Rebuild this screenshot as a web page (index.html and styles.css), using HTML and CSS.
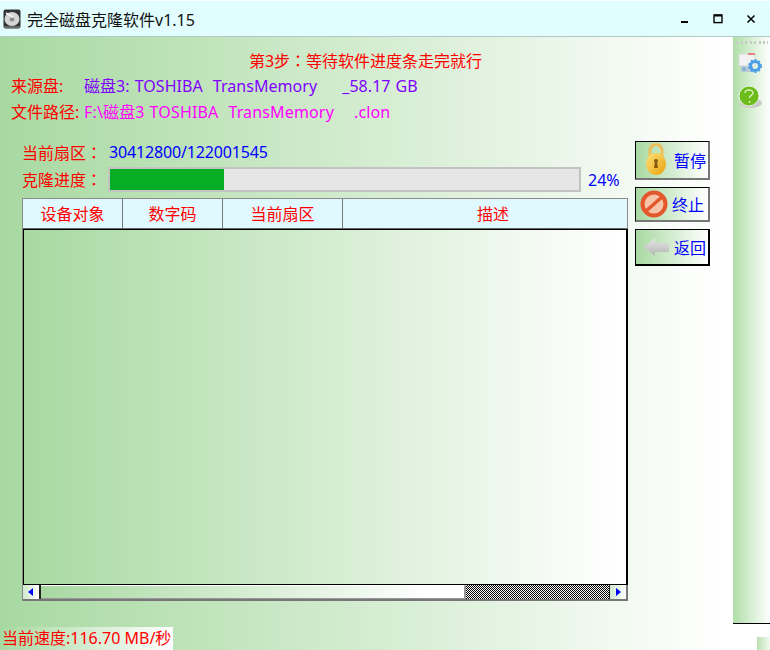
FILE: index.html
```html
<!DOCTYPE html>
<html lang="zh">
<head>
<meta charset="utf-8">
<title>完全磁盘克隆软件v1.15</title>
<link rel="stylesheet" href="styles.css">
</head>
<body>
<div class="app">
  <header class="titlebar">
    <svg class="app-icon" viewBox="0 0 18 20" width="18" height="20">
      <rect x="0.5" y="0.5" width="17" height="19" rx="2" fill="#333"/>
      <ellipse cx="9" cy="10" rx="7.500" ry="7" fill="#d4d4d4"/>
      <ellipse cx="9" cy="10.500" rx="2.400" ry="2" fill="#8a8a8a"/>
      <path d="M3 4 L10 8" stroke="#f4f4f4" stroke-width="1.500"/>
      <rect x="1" y="17" width="16" height="2" fill="#666"/>
    </svg>
    <span class="app-title">完全磁盘克隆软件v1.15</span>
    <div class="win-controls">
      <svg viewBox="0 0 12 12" width="12" height="12"><rect x="2" y="8" width="7" height="2" fill="#000"/></svg>
      <svg viewBox="0 0 12 12" width="12" height="12"><rect x="2" y="2" width="8" height="7.600" fill="none" stroke="#000" stroke-width="1.400"/><rect x="2" y="1.500" width="8" height="2" fill="#000"/></svg>
      <svg viewBox="0 0 12 12" width="12" height="12"><path d="M2.500 2.500 L9.500 9.500 M9.500 2.500 L2.500 9.500" stroke="#000" stroke-width="1.500" fill="none"/></svg>
    </div>
  </header>

  <div class="workspace">
    <main class="main">
      <p class="step">第3步<span class="colon" lang="zh-Hant">：</span>等待软件进度条走完就行</p>
      <div class="info-row"><span class="info-label">来源盘:</span><span class="source">磁盘3: TOSHIBA  TransMemory     _58.17 GB</span></div>
      <div class="info-row"><span class="info-label">文件路径:</span><span class="path">F:\磁盘3 TOSHIBA  TransMemory    .clon</span></div>

      <div class="content">
        <section class="left">
          <div class="prog-row"><span class="prog-label">当前扇区<span class="colon" lang="zh-Hant">：</span></span><span class="sector">30412800/122001545</span></div>
          <div class="prog-row bar-row">
            <span class="prog-label">克隆进度<span class="colon" lang="zh-Hant">：</span></span>
            <div class="bar"><div class="fill"></div></div>
            <span class="pct">24%</span>
          </div>
          <div class="table">
            <div class="thead">
              <div class="th c1">设备对象</div>
              <div class="th c2">数字码</div>
              <div class="th c3">当前扇区</div>
              <div class="th c4">描述</div>
            </div>
            <div class="tbody"></div>
            <div class="hscroll">
              <div class="sb-btn"><svg viewBox="0 0 8 8" width="8" height="8"><path d="M6 0 V8 L1 4 Z" fill="#0000ff"/></svg></div>
              <div class="sb-thumb"></div>
              <div class="sb-track"></div>
              <div class="sb-btn"><svg viewBox="0 0 8 8" width="8" height="8"><path d="M2 0 V8 L7 4 Z" fill="#0000ff"/></svg></div>
            </div>
          </div>
        </section>

        <aside class="actions">
          <button class="btn btn-pause">
            <svg viewBox="0 0 26 34" width="26" height="34">
              <defs><linearGradient id="gold" x1="0" y1="0" x2="1" y2="1"><stop offset="0" stop-color="#ffe27a"/><stop offset="1" stop-color="#e8a10c"/></linearGradient></defs>
              <path d="M7 14 V7 a6 5.500 0 0 1 12 0 V14" fill="none" stroke="#eebf5a" stroke-width="3"/>
              <ellipse cx="13" cy="21" rx="10" ry="11" fill="url(#gold)"/>
              <path d="M13 16 a2 2 0 0 1 1.200 3.600 L15 25 H11 L11.800 19.600 A2 2 0 0 1 13 16 Z" fill="#8a5a10"/>
            </svg>
            <span>暂停</span>
          </button>
          <button class="btn btn-stop">
            <svg viewBox="0 0 28 28" width="28" height="28">
              <circle cx="14" cy="14" r="11.500" fill="#f6c4a8" stroke="#e4562c" stroke-width="4"/>
              <path d="M5.500 21.500 L22.500 6.500" stroke="#e4562c" stroke-width="3.500"/>
            </svg>
            <span>终止</span>
          </button>
          <button class="btn btn-back">
            <svg viewBox="0 0 26 20" width="26" height="20">
              <defs><linearGradient id="grey" x1="0" y1="0" x2="0" y2="1"><stop offset="0" stop-color="#e8e8e8"/><stop offset="1" stop-color="#b4b4b4"/></linearGradient></defs>
              <path d="M0 10 L11 1 V6 H25 V15 H11 V19 Z" fill="url(#grey)"/>
            </svg>
            <span>返回</span>
          </button>
        </aside>
      </div>
    </main>

    <aside class="side">
      <div class="dots"></div>
      <svg class="side-icon printer" viewBox="0 0 24 22" width="24" height="22">
        <rect x="1" y="2" width="16" height="12" rx="1" fill="#f2f2f2" stroke="#d8d8d8"/>
        <rect x="10" y="1" width="7" height="2" fill="#e08080"/>
        <rect x="3" y="14" width="12" height="6" fill="#b8ccd8"/>
        <circle cx="6" cy="17" r="2" fill="#7fb2d8"/>
        <circle cx="17" cy="14" r="4.500" fill="none" stroke="#4a9ee8" stroke-width="3"/>
        <circle cx="17" cy="14" r="6.200" fill="none" stroke="#4a9ee8" stroke-width="1.500" stroke-dasharray="2 2"/>
      </svg>
      <svg class="side-icon help" viewBox="0 0 24 24" width="24" height="24">
        <ellipse cx="13" cy="18" rx="11" ry="5" fill="#c9c9c9"/>
        <circle cx="11" cy="11" r="10" fill="#6cbc1c" stroke="#eaf6e0" stroke-width="1"/>
        <path d="M7 8 a4 3 0 0 1 8 0 c0 2 -3.500 2.500 -3.500 5 M11.500 16 v2" fill="none" stroke="#d8f0b8" stroke-width="1.500"/>
      </svg>
    </aside>
  </div>

  <footer class="status">
    <div class="speed">当前速度:116.70 MB/秒</div>
    <div class="corner"></div>
  </footer>
</div>
</body>
</html>
```

FILE: styles.css
```css
* { box-sizing: border-box; }
html, body { margin: 0; padding: 0; }
body { width: 770px; height: 650px; overflow: hidden; font-family: "Noto Sans", "Noto Sans CJK SC", sans-serif; font-size: 16px; }

.app { width: 770px; height: 650px; display: flex; flex-direction: column; background: linear-gradient(90deg, #a8d9a1 0, #ffffff 725px); }
.colon { font-family: "Noto Sans CJK TC", sans-serif; }

.titlebar { height: 37px; flex: none; display: flex; align-items: center; padding: 0 13px 0 3px; background: #e2fdfe; border-top: 1px solid #f4ffff; border-bottom: 1px solid #b2c8c4; color: #111; }
.app-icon { margin-right: 6px; }
.app-title { font-size: 16px; }
.win-controls { margin-left: auto; display: flex; gap: 21px; }

.workspace { height: 587px; flex: none; display: flex; }
.main { width: 733px; flex: none; padding-top: 12px; }
.step { margin: 0 2px 4px 0; height: 22px; line-height: 22px; text-align: center; color: #ff0000; }
.info-row { display: flex; height: 22px; line-height: 22px; margin-bottom: 4px; padding-left: 11px; white-space: pre; }
.info-label { width: 73px; color: #ff0000; flex: none; }
.source { color: #8000ff; letter-spacing: 0.05px; word-spacing: 0.8px; }
.path { color: #ff00ff; letter-spacing: 0.15px; word-spacing: 0.7px; }

.content { display: flex; margin-top: 18px; padding-left: 22px; }
.left { width: 606px; flex: none; }
.prog-row { display: flex; height: 22px; line-height: 22px; margin-bottom: 4px; align-items: center; }
.bar-row { height: 25px; margin-bottom: 6px; }
.prog-label { width: 86px; color: #ff0000; flex: none; white-space: nowrap; }
.sector { color: #0000ff; margin-left: 1px; letter-spacing: -0.15px; }
.bar { width: 473px; height: 25px; border: 2px solid #c3c3c3; background: #e6e6e6; flex: none; }
.fill { width: 24.300%; height: 100%; background: #06ae26; }
.pct { margin-left: 7px; color: #0000ff; }

.table { height: 403px; display: flex; flex-direction: column; border-top: 1px solid #8a8a8a; border-left: 1px solid #8a8a8a; }
.thead { display: flex; height: 30px; flex: none; background: #e0f9ff; border-right: 1px solid #8a8a8a; border-bottom: 1px solid #666; }
.th { color: #ff0000; text-align: center; line-height: 31px; border-right: 1px solid #777; }
.c1 { width: 100px; }
.c2 { width: 100px; }
.c3 { width: 120px; }
.c4 { flex: 1; border-right: 0; padding-left: 16px; }
.tbody { flex: 1; border-top: 1px solid #000; border-left: 1px solid #000; border-right: 2px solid #000; border-bottom: 1px solid #000; background: linear-gradient(90deg, #a8d9a1, #ffffff 590px); }
.hscroll { display: flex; height: 16px; flex: none; border-right: 2px solid #777; border-bottom: 2px solid #777; }
.sb-btn { width: 18px; flex: none; display: flex; align-items: center; justify-content: center; background: linear-gradient(90deg, #cfe9cb, #ffffff); border-right: 2px solid #222; }
.sb-btn:last-child { width: 17px; border-right: 0; border-left: 1px solid #222; }
.sb-thumb { width: 425px; flex: none; background: linear-gradient(90deg, #a8d9a1, #ffffff 92%); border-top: 1px solid #fff; border-right: 2px solid #999; border-bottom: 1px solid #999; }
.sb-track { flex: 1; background: repeating-conic-gradient(#000 0 25%, #fff 0 50%) 0 0 / 2px 2px; }

.actions { margin-left: 7px; width: 75px; flex: none; display: flex; flex-direction: column; gap: 7px; }
.btn { width: 75px; padding: 0 2px 0 5px; display: flex; align-items: center; justify-content: space-between; background: linear-gradient(90deg, #a8d9a1, #ffffff); border: 1px solid #000; border-right: 2px solid #777; border-bottom: 2px solid #777; color: #0000ff; font: inherit; }
.btn-pause { height: 39px; padding-left: 7px; }
.btn-stop { height: 35px; padding: 0 4px 0 4px; }
.btn-back { height: 37px; padding: 0 2px 0 8px; border-right-color: #000; border-bottom-color: #000; }
.btn span { white-space: nowrap; }

.side { width: 37px; flex: none; display: flex; flex-direction: column; align-items: center; padding-top: 4px; background: linear-gradient(90deg, #b0dea8, #ffffff); border-bottom: 1px solid #000; }
.dots { width: 32px; height: 3px; flex: none; margin-bottom: 8px; background: repeating-linear-gradient(90deg, #c8c8c8 0 2px, transparent 2px 4.500px); }
.side-icon { flex: none; margin-bottom: 11px; }
.printer { margin-right: 3px; }
.help { margin-right: 3px; }

.status { flex: 1; display: flex; align-items: flex-end; }
.speed { height: 23px; line-height: 23px; width: 173px; padding-left: 2px; color: #ff0000; white-space: nowrap; background: linear-gradient(90deg, #a8d9a1, #ffffff); }
.corner { width: 13px; height: 13px; margin-left: auto; background: linear-gradient(90deg, #b8e0b0, #f4fbf3); }
```
